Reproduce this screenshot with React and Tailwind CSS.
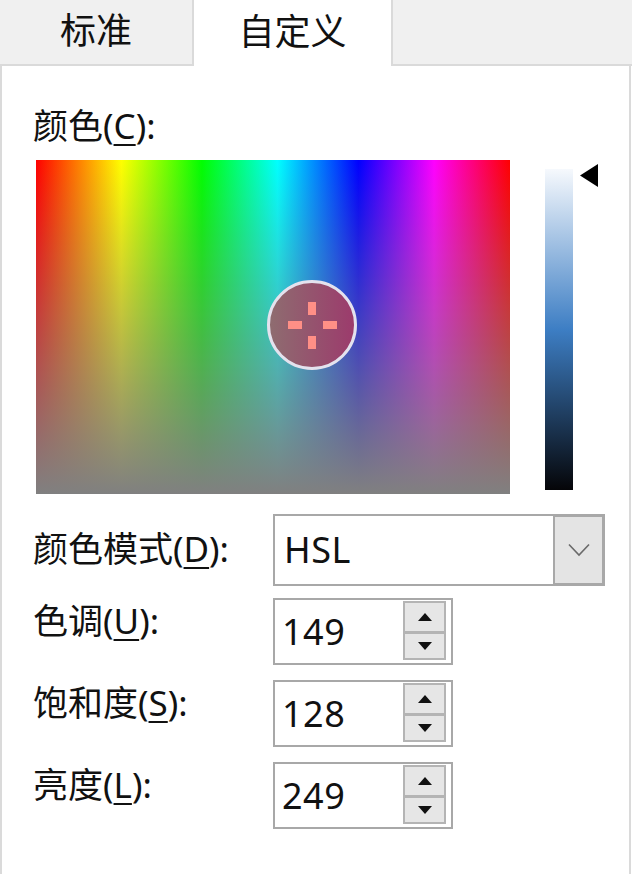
import { useState } from 'react';

const FONT = "font-['Noto_Sans','Noto_Sans_CJK_SC',sans-serif]";

function Key({ children }) {
  return <span className="underline decoration-2 underline-offset-[5px]">{children}</span>;
}

function Label({ text, k }) {
  return (
    <span className="text-[35px] leading-[40px] text-[#111] whitespace-nowrap">
      {text}(<Key>{k}</Key>):
    </span>
  );
}

function Cursor() {
  return (
    <svg width="90" height="90" viewBox="0 0 90 90">
      <defs>
        <linearGradient id="cur" x1="0" y1="0" x2="1" y2="0">
          <stop offset="0" stopColor="#8e6d70" />
          <stop offset="1" stopColor="#9c3a6c" />
        </linearGradient>
      </defs>
      <circle cx="45" cy="45" r="43.5" fill="url(#cur)" stroke="#e4e2ee" strokeWidth="3" />
      <rect x="41" y="22" width="8" height="13" fill="#ff8f86" />
      <rect x="41" y="56" width="8" height="13" fill="#ff8f86" />
      <rect x="21" y="41" width="14" height="8" fill="#ff8f86" />
      <rect x="56" y="41" width="14" height="8" fill="#ff8f86" />
    </svg>
  );
}

function Arrow({ up }) {
  return (
    <svg width="14" height="8" viewBox="0 0 14 8">
      <polygon points={up ? '0,8 7,0 14,8' : '0,0 14,0 7,8'} fill="#111" />
    </svg>
  );
}

function SpinBox({ value }) {
  return (
    <div className="w-[180px] h-[67px] border-2 border-[#a8a8a8] bg-white flex items-stretch">
      <div className="flex-1 flex items-center pl-[7px] text-[36px] tracking-[0.5px] text-[#111]">{value}</div>
      <div className="w-[43px] mt-[1px] mb-[3px] mr-[5px] flex flex-col">
        <div className="h-[32px] border-2 border-[#b4b4b4] bg-[#e6e6e6] flex items-center justify-center">
          <Arrow up />
        </div>
        <div className="flex-1 border-x-2 border-b-2 border-t border-[#b4b4b4] bg-[#e6e6e6] flex items-center justify-center">
          <Arrow />
        </div>
      </div>
    </div>
  );
}

export default function App() {
  const [tab] = useState('custom');
  const rows = [
    { text: '色调', k: 'U', value: 149 },
    { text: '饱和度', k: 'S', value: 128 },
    { text: '亮度', k: 'L', value: 249 },
  ];

  return (
    <div className={`w-[632px] h-[874px] bg-white flex flex-col overflow-hidden ${FONT}`}>
      <div className="h-[66px] flex bg-[#f0f0f0]">
        <div className="w-[192px] border-b-2 border-[#dadada] flex items-center justify-center pb-[2px] text-[36px] text-[#111]">
          标准
        </div>
        <div className={`w-[201px] border-x-2 border-[#dadada] flex items-center justify-center pb-[2px] text-[36px] text-[#111] ${tab === 'custom' ? 'bg-white' : ''}`}>
          自定义
        </div>
        <div className="flex-1 border-b-2 border-[#dadada]" />
      </div>

      <div className="w-[631px] flex-1 border-x-2 border-[#dadada] pl-[31px] pt-[40px] flex flex-col">
        <Label text="颜色" k="C" />

        <div className="mt-[14px] flex items-start">
          <div className="relative ml-[3px] w-[474px] h-[334px] bg-[linear-gradient(to_bottom,rgba(128,128,128,0),#808080),linear-gradient(to_right,#ff0000_0%,#ffff00_18%,#00ff00_35%,#00ffff_51%,#0000ff_68%,#ff00ff_84%,#ff0000_100%)]">
            <div className="absolute left-[231px] top-[120px]">
              <Cursor />
            </div>
          </div>
          <div className="ml-[35px] mt-[9px] w-[28px] h-[321px] bg-[linear-gradient(to_bottom,#f6f9fd,#3d7ec4,#050508)]" />
          <svg className="ml-[7px] mt-[4px]" width="18" height="23" viewBox="0 0 18 23">
            <polygon points="0,11.5 18,0 18,23" fill="#000" />
          </svg>
        </div>

        <div className="mt-[20px] flex items-center">
          <div className="w-[240px] -mt-[2px]">
            <Label text="颜色模式" k="D" />
          </div>
          <div className="w-[332px] h-[72px] border-2 border-[#a8a8a8] bg-white flex items-stretch">
            <div className="flex-1 flex items-center pl-[9px] text-[36px] tracking-[0.5px] text-[#111]">HSL</div>
            <div className="w-[50px] border-l-2 border-[#a8a8a8] bg-[#e4e4e4] flex items-center justify-center border-t border-r border-b">
              <svg width="22" height="14" viewBox="0 0 22 14">
                <polyline points="1,1.5 11,12 21,1.5" fill="none" stroke="#6a6a6a" strokeWidth="1.6" />
              </svg>
            </div>
          </div>
        </div>

        <div className="mt-[12px] flex flex-col gap-[15px]">
          {rows.map((r) => (
            <div key={r.k} className="flex items-start">
              <div className="w-[240px] pt-[3px]">
                <Label text={r.text} k={r.k} />
              </div>
              <SpinBox value={r.value} />
            </div>
          ))}
        </div>
      </div>
    </div>
  );
}
